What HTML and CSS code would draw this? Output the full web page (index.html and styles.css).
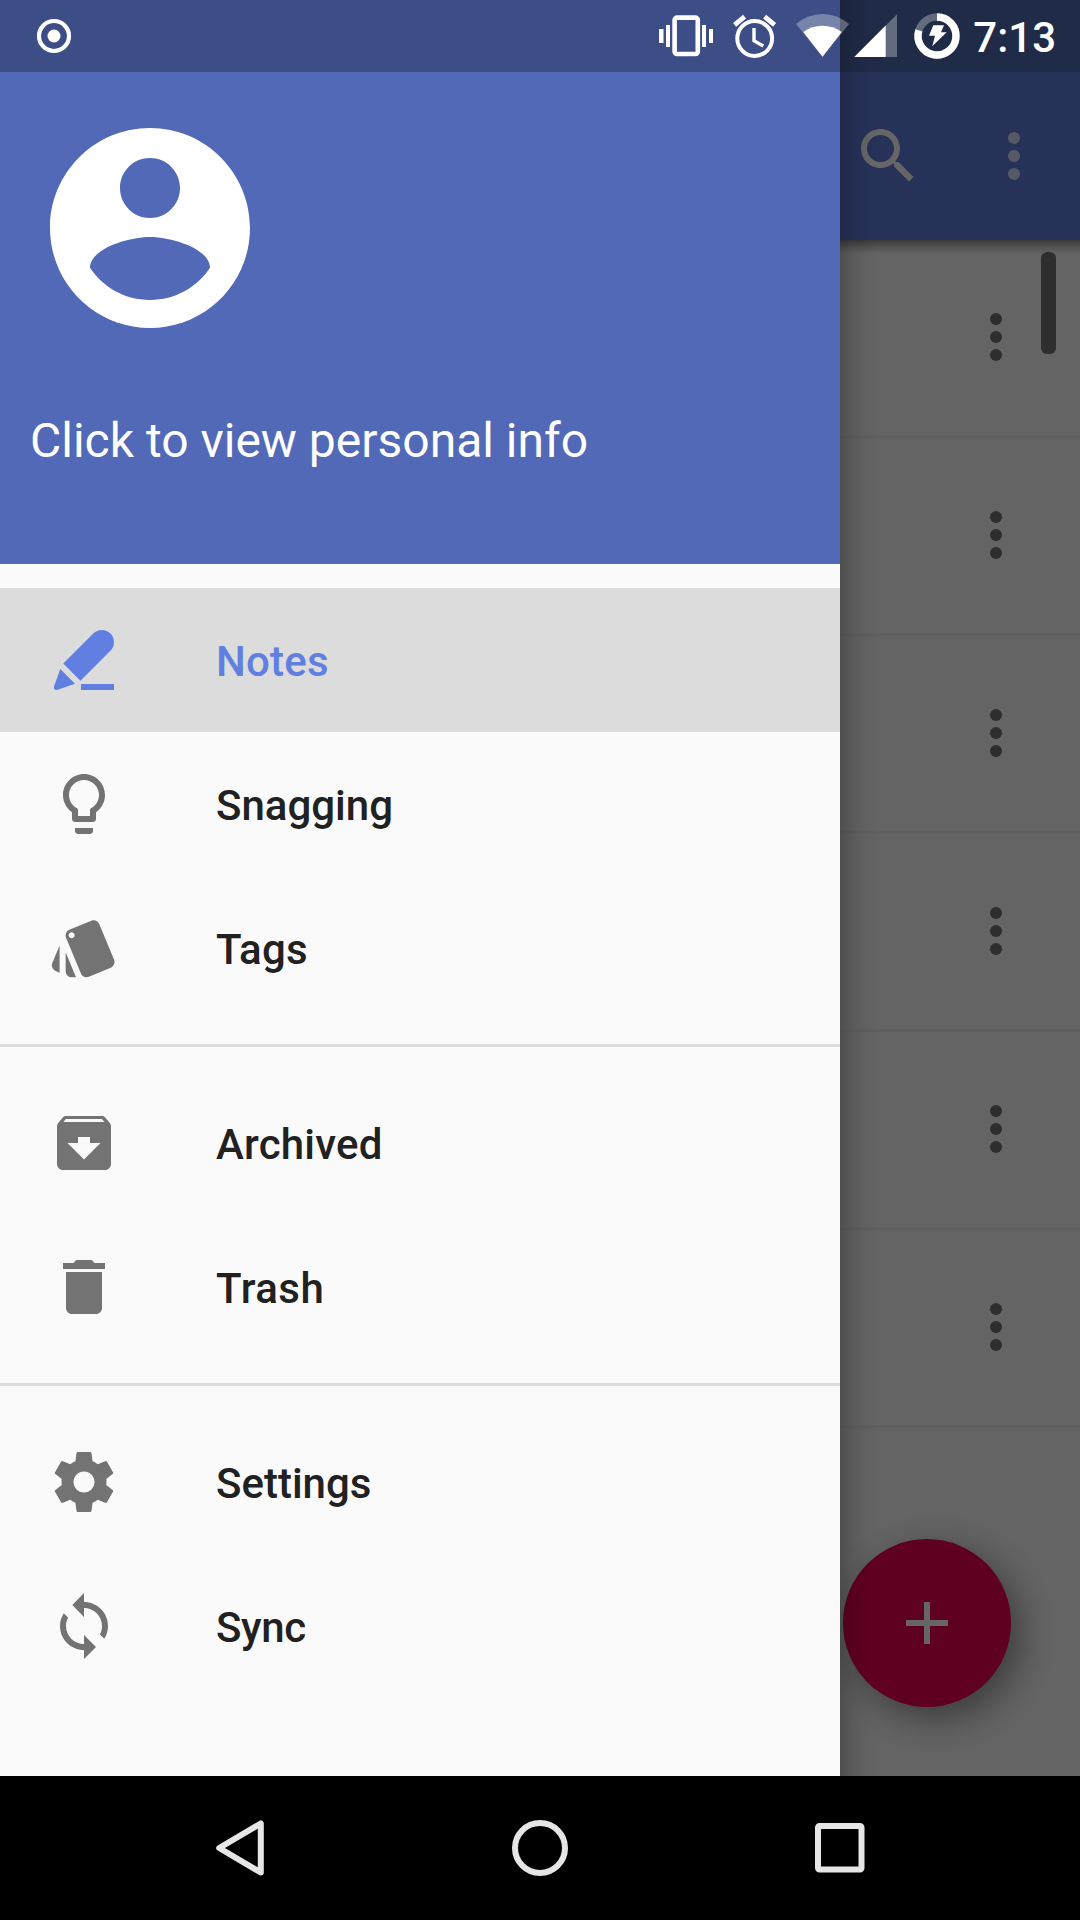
FILE: index.html
```html
<!DOCTYPE html>
<html lang="en">
<head>
<meta charset="utf-8">
<title>Notes</title>
<link rel="stylesheet" href="styles.css">
</head>
<body>
<svg class="defs" aria-hidden="true">
  <symbol id="more" viewBox="0 0 24 24"><circle cx="12" cy="6" r="2"/><circle cx="12" cy="12" r="2"/><circle cx="12" cy="18" r="2"/></symbol>
</svg>
<div class="screen">
  <main class="app">
    <div class="status-space"></div>
    <header class="toolbar">
      <svg class="icon icon-search" viewBox="0 0 24 24"><path d="M15.5 14h-.79l-.28-.27C15.41 12.59 16 11.11 16 9.5 16 5.91 13.09 3 9.5 3S3 5.91 3 9.5 5.91 16 9.5 16c1.61 0 3.09-.59 4.23-1.57l.27.28v.79l5 4.99L20.49 19l-4.99-5zm-6 0C7.01 14 5 11.99 5 9.5S7.01 5 9.5 5 14 7.01 14 9.5 11.99 14 9.5 14z"/></svg>
      <svg class="icon icon-overflow"><use href="#more"/></svg>
    </header>
    <section class="list">
      <div class="row"><svg class="icon"><use href="#more"/></svg></div>
      <div class="row"><svg class="icon"><use href="#more"/></svg></div>
      <div class="row"><svg class="icon"><use href="#more"/></svg></div>
      <div class="row"><svg class="icon"><use href="#more"/></svg></div>
      <div class="row"><svg class="icon"><use href="#more"/></svg></div>
      <div class="row"><svg class="icon"><use href="#more"/></svg></div>
      <div class="scrollbar"></div>
      <div class="fab"><svg class="icon" viewBox="0 0 24 24"><path d="M19 13h-6v6h-2v-6H5v-2h6V5h2v6h6v2z"/></svg></div>
    </section>
    <div class="scrim"></div>
  </main>

  <aside class="drawer">
    <div class="profile">
      <svg class="avatar" viewBox="0 0 24 24"><path d="M12 2C6.48 2 2 6.48 2 12s4.48 10 10 10 10-4.48 10-10S17.52 2 12 2zm0 3c1.66 0 3 1.34 3 3s-1.34 3-3 3-3-1.34-3-3 1.34-3 3-3zm0 14.2c-2.5 0-4.71-1.28-6-3.22.03-1.99 4-3.08 6-3.08 1.99 0 5.97 1.09 6 3.08-1.29 1.94-3.5 3.22-6 3.22z"/></svg>
      <div class="profile-text">Click to view personal info</div>
    </div>
    <nav class="menu">
      <div class="group">
        <a class="item active"><svg class="icon" viewBox="0 0 24 24"><path d="M5.1 13.2l10-10A4 4 0 0 1 20.8 8.9l-10 10zM4.1 15L9 19.9l-5.8 2.05Q1.8 22.2 2 20.8zM11 20h11v2H11z"/></svg><span class="label label-loose">Notes</span></a>
        <a class="item"><svg class="icon" viewBox="0 0 24 24"><path d="M9 21c0 .55.45 1 1 1h4c.55 0 1-.45 1-1v-1H9v1zm3-19C8.14 2 5 5.14 5 9c0 2.38 1.19 4.47 3 5.74V17c0 .55.45 1 1 1h6c.55 0 1-.45 1-1v-2.26c1.81-1.27 3-3.36 3-5.74 0-3.86-3.14-7-7-7zm2.85 11.1l-.85.6V16h-4v-2.3l-.85-.6C7.8 12.16 7 10.63 7 9c0-2.76 2.24-5 5-5s5 2.24 5 5c0 1.63-.8 3.16-2.15 4.1z"/></svg><span class="label">Snagging</span></a>
        <a class="item"><svg class="icon" viewBox="0 0 24 24"><path d="M2.53 19.65l1.34.56v-9.03l-2.43 5.86c-.41 1.02.08 2.19 1.09 2.61zm19.5-3.7L17.07 3.98c-.31-.75-1.04-1.21-1.81-1.23-.26 0-.53.04-.79.15L7.1 5.95c-.75.31-1.21 1.03-1.23 1.8-.01.27.04.54.15.8l4.96 11.97c.31.76 1.05 1.22 1.83 1.23.26 0 .52-.05.77-.15l7.36-3.05c1.02-.42 1.51-1.59 1.09-2.6zM7.88 8.75c-.55 0-1-.45-1-1s.45-1 1-1 1 .45 1 1-.45 1-1 1zm-2 11c0 1.1.9 2 2 2h1.45l-3.45-8.35v6.35z"/></svg><span class="label label-loose">Tags</span></a>
      </div>
      <div class="group">
        <a class="item"><svg class="icon" viewBox="0 0 24 24"><path d="M20.54 5.23l-1.39-1.68C18.88 3.21 18.47 3 18 3H6c-.47 0-.88.21-1.16.55L3.46 5.23C3.17 5.57 3 6.02 3 6.5V19c0 1.1.9 2 2 2h14c1.1 0 2-.9 2-2V6.5c0-.48-.17-.93-.46-1.27zM12 17.5L6.5 12H10v-2h4v2h3.5L12 17.5zM5.12 5l.81-1h12l.94 1H5.12z"/></svg><span class="label label-loose">Archived</span></a>
        <a class="item"><svg class="icon" viewBox="0 0 24 24"><path d="M6 19c0 1.1.9 2 2 2h8c1.1 0 2-.9 2-2V7H6v12zM19 4h-3.5l-.5-.6Q14.7 3 14.2 3H9.8Q9.3 3 9 3.4l-.5.6H5v2h14V4z"/></svg><span class="label label-looser">Trash</span></a>
      </div>
      <div class="group">
        <a class="item"><svg class="icon" viewBox="0 0 24 24"><path d="M19.43 12.98c.04-.32.07-.64.07-.98s-.03-.66-.07-.98l2.11-1.65c.19-.15.24-.42.12-.64l-2-3.46c-.12-.22-.39-.3-.61-.22l-2.49 1c-.52-.4-1.08-.73-1.69-.98l-.38-2.65C14.46 2.18 14.25 2 14 2h-4c-.25 0-.46.18-.49.42l-.38 2.65c-.61.25-1.17.59-1.69.98l-2.49-1c-.23-.09-.49 0-.61.22l-2 3.46c-.13.22-.07.49.12.64l2.11 1.65c-.04.32-.07.65-.07.98s.03.66.07.98l-2.11 1.65c-.19.15-.24.42-.12.64l2 3.46c.12.22.39.3.61.22l2.49-1c.52.4 1.08.73 1.69.98l.38 2.65c.03.24.24.42.49.42h4c.25 0 .46-.18.49-.42l.38-2.65c.61-.25 1.17-.59 1.69-.98l2.49 1c.23.09.49 0 .61-.22l2-3.46c.12-.22.07-.49-.12-.64l-2.11-1.65zM12 15.5c-1.93 0-3.5-1.57-3.5-3.5s1.57-3.5 3.5-3.5 3.5 1.57 3.5 3.5-1.57 3.5-3.5 3.5z"/></svg><span class="label">Settings</span></a>
        <a class="item"><svg class="icon" viewBox="0 0 24 24"><path d="M12 4V1L8.1 5l3.9 4V6c3.31 0 6 2.69 6 6 0 1.01-.25 1.97-.7 2.8l1.46 1.46C19.54 15.03 20 13.57 20 12c0-4.42-3.58-8-8-8zm0 14c-3.31 0-6-2.69-6-6 0-1.01.25-1.97.7-2.8L5.24 7.74C4.46 8.97 4 10.43 4 12c0 4.42 3.58 8 8 8v3l4-4-4-4v3z"/></svg><span class="label label-tight">Sync</span></a>
      </div>
    </nav>
  </aside>

  <div class="status">
    <svg class="status-record" viewBox="0 0 36 36"><circle cx="18" cy="18" r="15" fill="none" stroke="#fff" stroke-width="4.2"/><circle cx="18" cy="18" r="6.5"/></svg>
    <div class="status-right">
      <svg class="status-icons" viewBox="656 0 306 72">
        <g class="vibrate">
          <rect x="674.6" y="17.6" width="23.2" height="36.4" rx="2.5" fill="none" stroke="#fff" stroke-width="4.6"/>
          <path d="M659 29h4.5v14H659zM666 25h4v22h-4zM702 25h4v22h-4zM709 29h4v14h-4z"/>
        </g>
        <g fill="none" stroke="#fff" stroke-width="4">
          <circle cx="754.7" cy="38.5" r="17.4"/>
          <path d="M754 28v12.8l9.3 5.2" stroke-width="3.4"/>
          <path d="M734.6 24.8l10-8.2M764.6 16.6l10 8.2" stroke-width="4.8"/>
        </g>
        <path d="M822.5 56.7L796 24Q808 14 822.5 14T849 24z" opacity=".3"/>
        <path d="M822.5 56.7l-19.2-24.7Q812 25.7 822.5 25.7T841.7 32z"/>
        <path d="M854.3 57L897 14.3V57z" opacity=".3"/>
        <path d="M854.3 57l31.4-31.4V57z"/>
        <circle cx="937" cy="36" r="19" fill="none" stroke="#fff" stroke-opacity=".3" stroke-width="7.4"/>
        <path d="M937 17A19 19 0 1 1 918.9 30.3" fill="none" stroke="#fff" stroke-width="7.4"/>
        <path d="M933.3 25.3H944l-3 7h5.7l-14.4 14 2.7-10.6h-6z"/>
      </svg>
      <span class="clock">7:13</span>
    </div>
  </div>

  <footer class="navbar">
    <svg viewBox="0 0 72 72"><path class="line" d="M15.2 36L56.8 11.5V60.5z"/></svg>
    <svg viewBox="0 0 72 72"><circle class="line" cx="36" cy="36" r="25"/></svg>
    <svg viewBox="0 0 72 72"><rect class="line" x="14" y="14" width="43.5" height="43.5" rx="1.5"/></svg>
  </footer>
</div>
</body>
</html>
```
FILE: styles.css
```css
* { box-sizing: border-box; }

body {
  margin: 0;
  font-family: Roboto, "Noto Sans", sans-serif;
  background: #000;
}

svg { display: block; }
.defs { display: none; }

.screen {
  position: relative;
  display: flex;
  flex-direction: column;
  width: 1080px;
  height: 1920px;
  overflow: hidden;
}

.icon {
  width: 72px;
  height: 72px;
  flex: none;
}

/* Notes list behind the drawer */
.app {
  position: relative;
  isolation: isolate;
  flex: 1;
  display: flex;
  flex-direction: column;
  background: #fafafa;
  overflow: hidden;
}

.status-space { height: 72px; background: #506bb4; }

.toolbar {
  position: relative;
  z-index: 1;
  display: flex;
  align-items: center;
  justify-content: flex-end;
  gap: 54px;
  height: 168px;
  padding-right: 30px;
  background: #617ddf;
}

.toolbar::after {
  content: "";
  position: absolute;
  left: 0;
  right: 0;
  top: 100%;
  height: 14px;
  background: linear-gradient(rgba(0, 0, 0, .42), rgba(0, 0, 0, .18) 50%, rgba(0, 0, 0, 0));
}

.icon-search { fill: #fff; }
.icon-overflow { fill: #d7e1ff; }

.list { position: relative; flex: 1; }

.row {
  display: flex;
  align-items: center;
  justify-content: flex-end;
  height: 198px;
  padding: 0 48px 1px 0;
  border-bottom: 3px solid #f1f1f1;
  fill: #737373;
}

.scrollbar {
  position: absolute;
  top: 12px;
  right: 24px;
  width: 15px;
  height: 102px;
  border-radius: 6px;
  background: #737373;
}

.fab {
  position: absolute;
  right: 69px;
  bottom: 69px;
  display: flex;
  align-items: center;
  justify-content: center;
  width: 168px;
  height: 168px;
  border-radius: 50%;
  background: #f00050;
  fill: #fff;
  box-shadow: 9px 11px 36px rgba(0, 0, 0, .42);
}

.scrim {
  position: absolute;
  inset: 0;
  z-index: 2;
  background: rgba(0, 0, 0, .6);
}

/* Navigation drawer */
.drawer {
  position: absolute;
  top: 0;
  left: 0;
  bottom: 144px;
  width: 840px;
  background: #fafafa;
}

.drawer::after {
  content: "";
  position: absolute;
  top: 0;
  bottom: 0;
  left: 100%;
  width: 40px;
  background: linear-gradient(to right, rgba(0, 0, 0, .22), rgba(0, 0, 0, .09) 35%, rgba(0, 0, 0, .02) 75%, rgba(0, 0, 0, 0));
}

.profile {
  height: 564px;
  padding: 108px 30px 0;
  background: #5169b6;
}

.avatar { width: 240px; height: 240px; fill: #fff; }

.profile-text {
  margin-top: 65px;
  font-size: 48px;
  line-height: 56px;
  color: #fff;
}

.group { padding: 24px 0; }
.group + .group { border-top: 3px solid #dcdcdc; }

.item {
  display: flex;
  align-items: center;
  gap: 96px;
  height: 144px;
  padding: 0 48px;
  font-size: 42px;
  font-weight: 500;
  line-height: 50px;
  color: #212121;
}

.label { padding-top: 3px; }
.label-loose { letter-spacing: .2px; }
.label-looser { letter-spacing: .5px; }
.label-tight { letter-spacing: -.4px; }

.item .icon { fill: #737373; }
.item.active { background: #dcdcdc; color: #617fe0; }
.item.active .icon { fill: #617fe0; }

/* Status bar */
.status {
  position: absolute;
  top: 0;
  left: 0;
  right: 0;
  display: flex;
  align-items: center;
  justify-content: space-between;
  height: 72px;
  padding: 0 24px 0 36px;
  background: linear-gradient(#3d4e86, #3d4e86) 0 0 / 840px 100% no-repeat;
  fill: #fff;
}

.status-record { width: 36px; height: 36px; }

.status-right { display: flex; align-items: center; gap: 11px; }
.status-icons { width: 306px; height: 72px; }

.clock {
  padding-top: 3px;
  font-size: 42px;
  font-weight: 500;
  line-height: 50px;
  color: #fff;
}

/* System navigation */
.navbar {
  display: flex;
  align-items: center;
  justify-content: space-between;
  height: 144px;
  padding: 0 204px;
  background: #000;
}

.navbar svg { width: 72px; height: 72px; }

.line {
  fill: none;
  stroke: #e6e6e6;
  stroke-width: 6px;
  stroke-linejoin: round;
}
```
